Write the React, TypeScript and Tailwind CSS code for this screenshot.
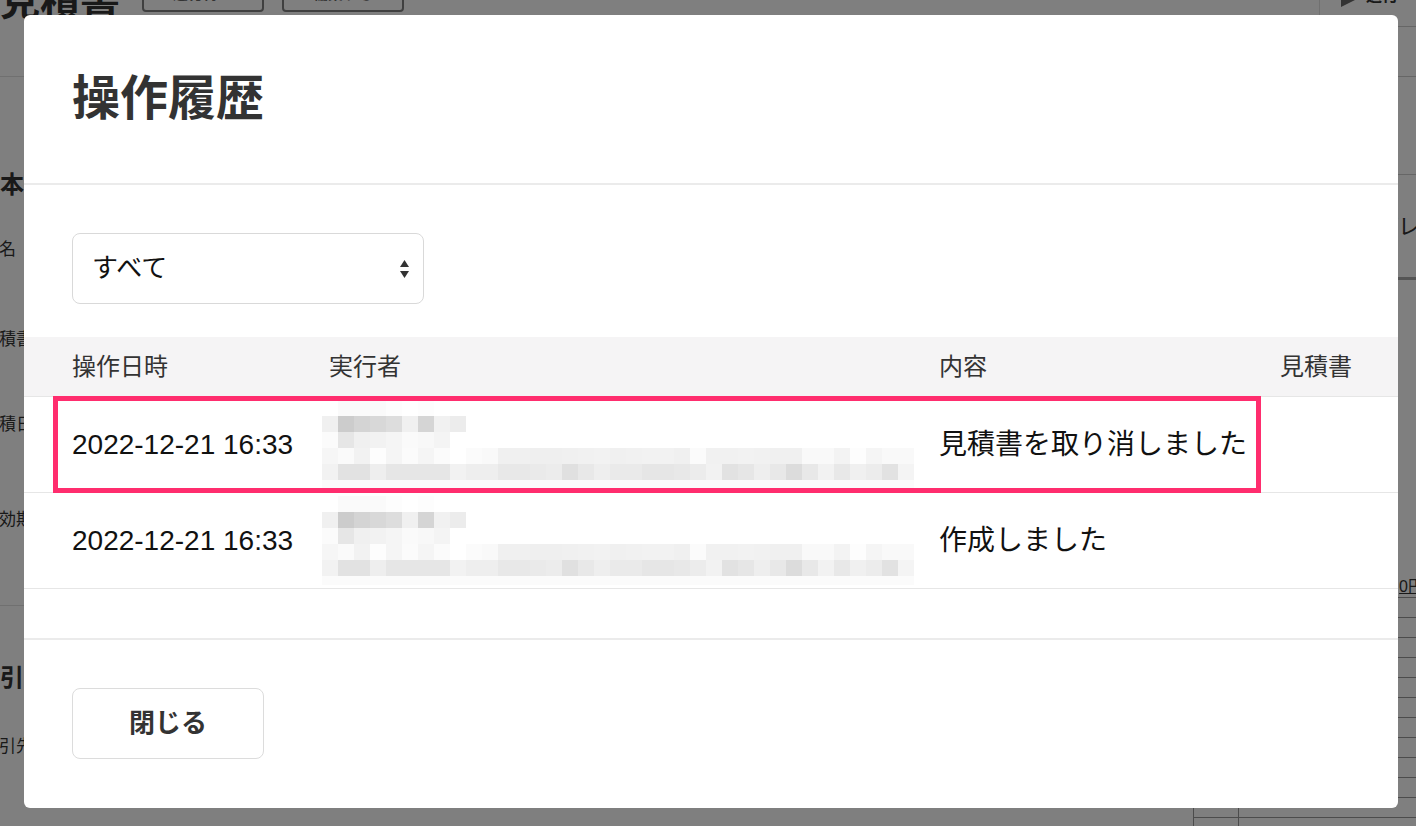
import React from 'react';

// Pixelated (blurred) executor name + email, values are grey levels per block
const SHORT_A = ['ff', 'fa', 'fa', 'fa', 'fd', 'ff', 'fd', 'ff', 'ff'];
const SHORT_B = ['f0', 'cc', 'd4', 'd8', 'dd', 'f0', 'd5', 'f1', 'ec'];
const SHORT_C = ['fb', 'e6', 'f0', 'f2', 'f5', 'fa', 'f8', 'f4', 'ff'];
const LONG_D = [
  'f6', 'fa', 'f2', 'fd', 'f5', 'fb', 'f5', 'fb', 'ff', 'fb', 'f9', 'f0', 'f0', 'ef', 'ef', 'f0', 'f1', 'f2', 'f0',
  'f1', 'f2', 'f2', 'f0', 'fb', 'f1', 'f1', 'f2', 'f1', 'f0', 'f0', 'f9', 'f9', 'f3', 'fd', 'f5', 'f9', 'f9',
];
const LONG_E = [
  'f2', 'e2', 'e2', 'ee', 'e6', 'e6', 'e6', 'e6', 'f2', 'ee', 'ee', 'e8', 'e8', 'ea', 'ec', 'e0', 'e8', 'ee', 'ea',
  'ea', 'e6', 'e6', 'e8', 'ec', 'f2', 'e2', 'e6', 'ee', 'e8', 'dc', 'e8', 'f2', 'e8', 'f0', 'ec', 'e2', 'f4',
];
const LONG_F = Array(37).fill('fb');

const MOSAIC = [
  { cls: 'h-[16px]', cells: SHORT_A },
  { cls: 'h-[16px]', cells: SHORT_B },
  { cls: 'h-[16px]', cells: SHORT_C },
  { cls: 'h-[16px]', cells: LONG_D },
  { cls: 'h-[16px]', cells: LONG_E },
  { cls: 'h-[9px]', cells: LONG_F },
];

const HISTORY = [
  { at: '2022-12-21 16:33', text: '見積書を取り消しました', marked: true },
  { at: '2022-12-21 16:33', text: '作成しました', marked: false },
];

const COLS = 'grid grid-cols-[281px_610px_341px_1fr]';

function Mosaic() {
  return (
    <div className="-ml-[7px] flex flex-col">
      {MOSAIC.map((row, i) => (
        <div key={i} className={`flex ${row.cls}`}>
          {row.cells.map((v, j) => (
            <div key={j} className="h-full w-[16px]" style={{ backgroundColor: `#${v}${v}${v}` }} />
          ))}
        </div>
      ))}
    </div>
  );
}

function SortArrows() {
  return (
    <svg width="9" height="18" viewBox="0 0 9 18" className="fill-[#333]">
      <polygon points="0,7 4.5,0 9,7" />
      <polygon points="0,11 9,11 4.5,18" />
    </svg>
  );
}

// The estimate page behind the dialog (only its edges show)
function BackgroundPage() {
  return (
    <div className="flex h-full flex-col">
      <div className="flex h-[290px] shrink-0">
        <div className="flex flex-1 flex-col">
          <div className="h-[77px] overflow-hidden border-b border-[#e0e0e0]">
            <div className="-mt-[24px] flex items-end">
              <h1 className="text-[40px] leading-[44px] font-bold">見積書</h1>
              <div className="mb-[11px] ml-[22px] flex gap-[18px]">
                <div className="flex h-[36px] w-[122px] items-center justify-center rounded-[4px] border-2 border-[#808080] text-[15px] font-bold text-[#666]">
                  送付待ち
                </div>
                <div className="flex h-[36px] w-[122px] items-center justify-center rounded-[4px] border-2 border-[#808080] text-[15px] font-bold text-[#666]">
                  編集する
                </div>
              </div>
            </div>
          </div>
          <h2 className="mt-[90px] -ml-[24px] text-[24px] leading-[36px] font-bold">基本情報</h2>
          <p className="mt-[35px] -ml-[18px] text-[17px] leading-[24px]">件名</p>
        </div>
        <aside className="flex w-[97px] flex-col border-l border-[#e0e0e0]">
          <div className="flex h-[27px] items-start gap-[6px] overflow-hidden border-b border-[#ccc] pl-[21px]">
            <svg width="19" height="19" viewBox="0 0 19 19" className="-mt-[12px] shrink-0 fill-[#666]">
              <polygon points="0,0 19,9.5 0,19" />
            </svg>
            <span className="-mt-[16px] text-[16px] font-bold whitespace-nowrap">送付</span>
          </div>
          <div className="h-[50px] border-b border-[#ccc]" />
          <div className="h-[98px] border-b border-[#ccc]" />
          <div className="flex h-[105px] items-center border-b-[3px] border-[#aaa] pl-[56px] text-[22px] whitespace-nowrap">
            プレビュー
          </div>
        </aside>
      </div>

      <div className="flex min-h-0 flex-1">
        <div className="flex w-[1193px] flex-col">
          <p className="mt-[38px] -ml-[18px] text-[17px] leading-[24px]">見積書番号</p>
          <p className="mt-[61px] -ml-[18px] text-[17px] leading-[24px]">見積日</p>
          <p className="mt-[71px] -ml-[18px] text-[17px] leading-[24px]">有効期限</p>
          <div className="mt-[73px] h-px bg-[#e0e0e0]" />
          <h2 className="mt-[54px] -ml-[24px] text-[24px] leading-[36px] font-bold">取引先</h2>
          <p className="mt-[39px] -ml-[18px] text-[17px] leading-[24px]">取引先</p>
        </div>
        <div className="flex flex-1 flex-col">
          <div className="mt-[287px] -mr-[8px] h-[20px] shrink-0 text-right text-[16px] leading-[20px] underline">0円</div>
          <div className="shrink-0 border-t border-l border-[#999]">
            {Array.from({ length: 12 }).map((_, i) => (
              <div key={i} className="flex h-[20px] border-b border-[#999]">
                <div className="w-[45px] border-r border-[#999]" />
              </div>
            ))}
          </div>
        </div>
      </div>
    </div>
  );
}

function HistoryDialog() {
  return (
    <div className="flex w-[1374px] flex-col overflow-hidden rounded-[6px] bg-white">
      <div className="border-b-2 border-[#ebebeb] p-12">
        <h2 className="text-[48px] leading-[72px] font-bold text-[#333]">操作履歴</h2>
      </div>

      <div className="pt-[48px] pb-[49px]">
        <div className="ml-12 flex h-[71px] w-[352px] items-center justify-between rounded-[8px] border border-[#d9d9d9] pr-[14px] pl-[19px]">
          <span className="text-[26px] text-[#111]">すべて</span>
          <SortArrows />
        </div>

        <div className="mt-[33px]">
          <div className={`${COLS} h-[60px] items-center border-b border-[#e6e6e6] bg-[#f5f4f5] text-[24px] text-[#333]`}>
            <div className="pl-12">操作日時</div>
            <div className="pl-6">実行者</div>
            <div className="pl-6">内容</div>
            <div className="pl-6">見積書</div>
          </div>
          {HISTORY.map((h, i) => (
            <div key={i} className={`${COLS} relative h-[96px] items-center border-b border-[#e6e6e6] text-[28px] text-[#111]`}>
              <div className="pl-12 whitespace-nowrap">{h.at}</div>
              <div className="pl-6">
                <Mosaic />
              </div>
              <div className="pl-6 whitespace-nowrap">{h.text}</div>
              <div className="pl-6" />
              {h.marked && (
                <div className="pointer-events-none absolute top-[-1px] left-[29px] h-[97px] w-[1208px] border-[5px] border-[#ff2d6e]" />
              )}
            </div>
          ))}
        </div>
      </div>

      <div className="border-t-2 border-[#ebebeb] px-12 pt-[48px] pb-[49px]">
        <button className="flex h-[71px] w-[192px] items-center justify-center rounded-[8px] border border-[#dcdcdc] bg-white text-[26px] font-bold text-[#333]">
          閉じる
        </button>
      </div>
    </div>
  );
}

export default function App() {
  return (
    <div className="relative h-[826px] w-[1416px] overflow-hidden bg-white font-['Liberation_Sans','Noto_Sans_CJK_JP',sans-serif] text-[#333]">
      <BackgroundPage />
      <div className="absolute inset-0 bg-[rgba(0,0,0,0.5)] pt-[15px] pl-[24px]">
        <HistoryDialog />
      </div>
    </div>
  );
}
